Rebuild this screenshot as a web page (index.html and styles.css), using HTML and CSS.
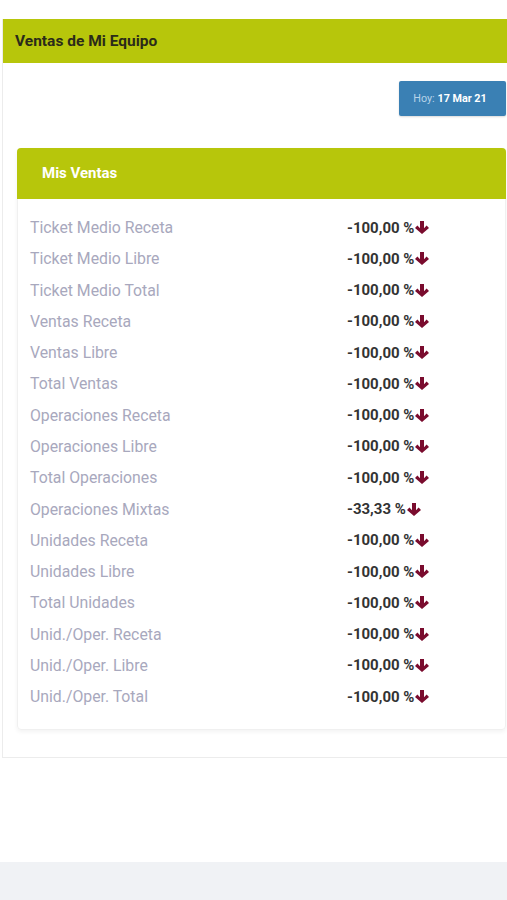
FILE: index.html
```html
<!DOCTYPE html>
<html lang="es">
<head>
  <meta charset="UTF-8">
  <title>Ventas de Mi Equipo</title>
  <link rel="stylesheet" href="styles.css">
</head>
<body>
  <div class="pagina">
    <div class="panel">
      <div class="panel-titulo">Ventas de Mi Equipo</div>

      <div class="panel-cuerpo">
        <div class="fila-fecha">
          <button class="btn-fecha"><span class="hoy">Hoy:</span> 17 Mar 21</button>
        </div>

        <div class="tarjeta">
          <div class="tarjeta-titulo">Mis Ventas</div>
          <div class="tarjeta-cuerpo">
            <div class="fila"><span class="etiqueta">Ticket Medio Receta</span><span class="valor">-100,00 %<svg class="flecha" viewBox="0 0 14 13"><path d="M5 0h4v7.2l2.6-2.6 2.4 2.4L7 13 0 7l2.4-2.4L5 7.2z"/></svg></span></div>
            <div class="fila"><span class="etiqueta">Ticket Medio Libre</span><span class="valor">-100,00 %<svg class="flecha" viewBox="0 0 14 13"><path d="M5 0h4v7.2l2.6-2.6 2.4 2.4L7 13 0 7l2.4-2.4L5 7.2z"/></svg></span></div>
            <div class="fila"><span class="etiqueta">Ticket Medio Total</span><span class="valor">-100,00 %<svg class="flecha" viewBox="0 0 14 13"><path d="M5 0h4v7.2l2.6-2.6 2.4 2.4L7 13 0 7l2.4-2.4L5 7.2z"/></svg></span></div>
            <div class="fila"><span class="etiqueta">Ventas Receta</span><span class="valor">-100,00 %<svg class="flecha" viewBox="0 0 14 13"><path d="M5 0h4v7.2l2.6-2.6 2.4 2.4L7 13 0 7l2.4-2.4L5 7.2z"/></svg></span></div>
            <div class="fila"><span class="etiqueta">Ventas Libre</span><span class="valor">-100,00 %<svg class="flecha" viewBox="0 0 14 13"><path d="M5 0h4v7.2l2.6-2.6 2.4 2.4L7 13 0 7l2.4-2.4L5 7.2z"/></svg></span></div>
            <div class="fila"><span class="etiqueta">Total Ventas</span><span class="valor">-100,00 %<svg class="flecha" viewBox="0 0 14 13"><path d="M5 0h4v7.2l2.6-2.6 2.4 2.4L7 13 0 7l2.4-2.4L5 7.2z"/></svg></span></div>
            <div class="fila"><span class="etiqueta">Operaciones Receta</span><span class="valor">-100,00 %<svg class="flecha" viewBox="0 0 14 13"><path d="M5 0h4v7.2l2.6-2.6 2.4 2.4L7 13 0 7l2.4-2.4L5 7.2z"/></svg></span></div>
            <div class="fila"><span class="etiqueta">Operaciones Libre</span><span class="valor">-100,00 %<svg class="flecha" viewBox="0 0 14 13"><path d="M5 0h4v7.2l2.6-2.6 2.4 2.4L7 13 0 7l2.4-2.4L5 7.2z"/></svg></span></div>
            <div class="fila"><span class="etiqueta">Total Operaciones</span><span class="valor">-100,00 %<svg class="flecha" viewBox="0 0 14 13"><path d="M5 0h4v7.2l2.6-2.6 2.4 2.4L7 13 0 7l2.4-2.4L5 7.2z"/></svg></span></div>
            <div class="fila"><span class="etiqueta">Operaciones Mixtas</span><span class="valor">-33,33 %<svg class="flecha" viewBox="0 0 14 13"><path d="M5 0h4v7.2l2.6-2.6 2.4 2.4L7 13 0 7l2.4-2.4L5 7.2z"/></svg></span></div>
            <div class="fila"><span class="etiqueta">Unidades Receta</span><span class="valor">-100,00 %<svg class="flecha" viewBox="0 0 14 13"><path d="M5 0h4v7.2l2.6-2.6 2.4 2.4L7 13 0 7l2.4-2.4L5 7.2z"/></svg></span></div>
            <div class="fila"><span class="etiqueta">Unidades Libre</span><span class="valor">-100,00 %<svg class="flecha" viewBox="0 0 14 13"><path d="M5 0h4v7.2l2.6-2.6 2.4 2.4L7 13 0 7l2.4-2.4L5 7.2z"/></svg></span></div>
            <div class="fila"><span class="etiqueta">Total Unidades</span><span class="valor">-100,00 %<svg class="flecha" viewBox="0 0 14 13"><path d="M5 0h4v7.2l2.6-2.6 2.4 2.4L7 13 0 7l2.4-2.4L5 7.2z"/></svg></span></div>
            <div class="fila"><span class="etiqueta">Unid./Oper. Receta</span><span class="valor">-100,00 %<svg class="flecha" viewBox="0 0 14 13"><path d="M5 0h4v7.2l2.6-2.6 2.4 2.4L7 13 0 7l2.4-2.4L5 7.2z"/></svg></span></div>
            <div class="fila"><span class="etiqueta">Unid./Oper. Libre</span><span class="valor">-100,00 %<svg class="flecha" viewBox="0 0 14 13"><path d="M5 0h4v7.2l2.6-2.6 2.4 2.4L7 13 0 7l2.4-2.4L5 7.2z"/></svg></span></div>
            <div class="fila"><span class="etiqueta">Unid./Oper. Total</span><span class="valor">-100,00 %<svg class="flecha" viewBox="0 0 14 13"><path d="M5 0h4v7.2l2.6-2.6 2.4 2.4L7 13 0 7l2.4-2.4L5 7.2z"/></svg></span></div>
          </div>
        </div>
      </div>
    </div>

    <div class="relleno"></div>
    <div class="pie"></div>
  </div>
</body>
</html>
```

FILE: styles.css
```css
body {
  font-family: Roboto, 'Liberation Sans', sans-serif;
  margin: 0;
  background-color: #fff;
  color: #333;
}

.pagina {
  padding-top: 19px;
}

.panel {
  margin-left: 2px;
  border-left: 1px solid #ececec;
  border-bottom: 1px solid #ececec;
}

.panel-titulo {
  background-color: #b7c60b;
  color: #2b2b1a;
  height: 44px;
  line-height: 44px;
  padding-left: 12px;
  font-size: 15.5px;
  font-weight: bold;
}

.panel-cuerpo {
  padding: 18px 1px 27px 14px;
}

.fila-fecha {
  display: flex;
  justify-content: flex-end;
}

.btn-fecha {
  width: 107px;
  height: 35px;
  padding: 0 5px 0 0;
  background-color: #3a80b4;
  border: none;
  border-radius: 2px;
  color: #fff;
  font-family: Roboto, 'Liberation Sans', sans-serif;
  font-size: 10.8px;
  font-weight: bold;
  box-shadow: 0 1px 2px rgba(0, 0, 0, 0.15);
}

.btn-fecha .hoy {
  font-weight: normal;
  color: #b7d3e8;
}

.tarjeta {
  margin-top: 32px;
  border: 1px solid #f0f0f0;
  border-radius: 4px;
  box-shadow: 0 2px 4px rgba(0, 0, 0, 0.05);
}

.tarjeta-titulo {
  background-color: #b7c60b;
  color: #fff;
  height: 51px;
  line-height: 51px;
  padding-left: 25px;
  font-size: 15px;
  font-weight: bold;
  border-radius: 4px 4px 0 0;
  margin: -1px -1px 0 -1px;
}

.tarjeta-cuerpo {
  padding: 13px 0 17px 12px;
}

.fila {
  display: grid;
  grid-template-columns: 317px 1fr;
  height: 31.27px;
  align-items: center;
}

.etiqueta {
  color: #a8a8bd;
  font-size: 15.8px;
}

.valor {
  font-size: 15px;
  font-weight: bold;
  color: #333;
  display: flex;
  align-items: center;
}

.flecha {
  width: 14px;
  height: 13px;
  fill: #7a0c2e;
  margin-left: 1px;
}

.relleno {
  height: 104px;
}

.pie {
  height: 38px;
  background-color: #f0f2f5;
}
```
